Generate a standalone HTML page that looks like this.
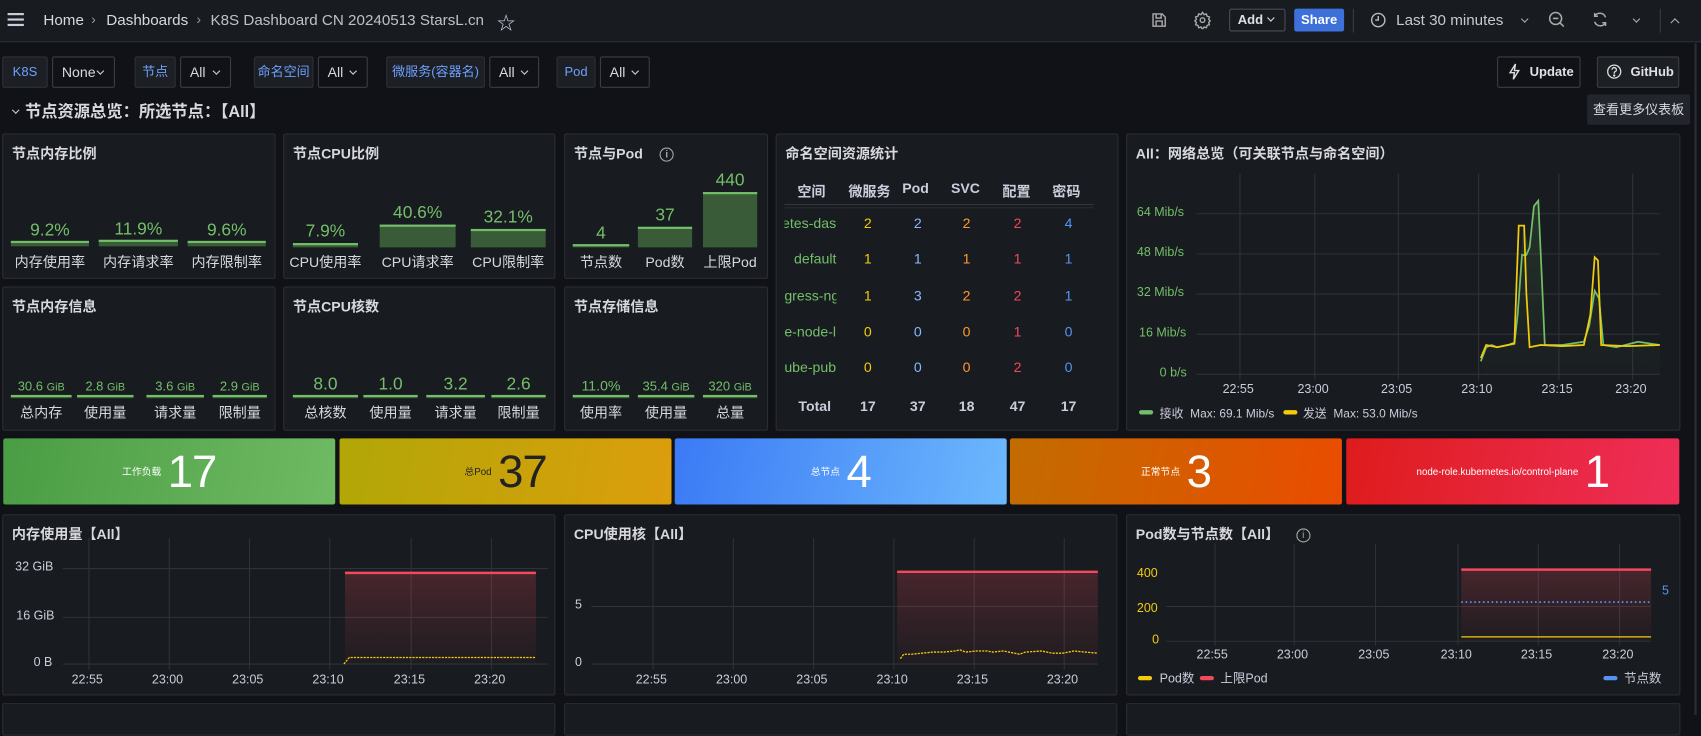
<!DOCTYPE html>
<html><head><meta charset="utf-8">
<style>
html,body{margin:0;padding:0;background:#111217;width:1701px;height:715px;overflow:hidden;}
#root{position:absolute;left:0;top:0;width:1568px;height:659px;transform:scale(1.08482,1.085);transform-origin:0 0;background:#111217;font-family:"Liberation Sans","Noto Sans CJK SC",sans-serif;color:#ccccdc;}
.a{position:absolute;}
.hdr{left:0;top:0;width:1568px;height:38px;background:#181b1f;border-bottom:1px solid #2c2f35;}
.t{position:absolute;white-space:nowrap;font-size:13px;}
.pn{position:absolute;background:#181b1f;border:1px solid #2a2d33;border-radius:2px;box-sizing:border-box;}
.pt{position:absolute;left:8px;top:7px;font-size:13px;font-weight:700;color:#d8d9e0;white-space:nowrap;}
.vl{position:absolute;top:52px;height:29px;box-sizing:border-box;border:1px solid #2c3036;background:#1c1f24;color:#6e9fff;font-size:12px;line-height:27px;text-align:center;border-radius:2px;}
.vv{position:absolute;top:52px;height:29px;box-sizing:border-box;border:1px solid #3a3d44;background:#111217;color:#d8d9e0;font-size:13px;line-height:27px;padding-left:8px;border-radius:2px;}
.vv:after{content:"";position:absolute;right:10px;top:10px;width:4px;height:4px;border-right:1.3px solid #ccc;border-bottom:1.3px solid #ccc;transform:rotate(45deg);}
.col{position:absolute;text-align:center;}
.val{position:absolute;left:0;right:0;color:#73bf69;white-space:nowrap;text-align:center;}
.bar{position:absolute;left:0;right:0;background:#3a5b37;border-top:2px solid #73bf69;box-sizing:border-box;}
.lab{position:absolute;left:-10px;right:-10px;font-size:13px;color:#d8d9e0;text-align:center;white-space:nowrap;}
.st{position:absolute;top:404px;height:61px;border-radius:2px;display:flex;align-items:center;justify-content:center;gap:6px;}
.st .s{font-size:9px;}
.st .n{font-size:42px;font-weight:400;letter-spacing:-1px;}
.tc{position:absolute;font-size:13px;text-align:center;width:44px;}
.ax{position:absolute;font-size:11.5px;color:#ccccdc;white-space:nowrap;}
</style></head><body><div id="root">

<!-- header -->
<div class="a hdr"></div>
<div class="a" style="left:7px;top:12px;width:15px;height:2px;background:#ccccdc;box-shadow:0 5px 0 #ccccdc,0 10px 0 #ccccdc"></div>
<div class="t" style="left:40px;top:10px;font-size:14px;color:#d8d9e0">Home</div>
<div class="t" style="left:84px;top:10px;font-size:13px;color:#999">›</div>
<div class="t" style="left:98px;top:10px;font-size:14px;color:#d8d9e0">Dashboards</div>
<div class="t" style="left:181px;top:10px;font-size:13px;color:#999">›</div>
<div class="t" style="left:194px;top:10px;font-size:14px;color:#c0c1c8">K8S Dashboard CN 20240513 StarsL.cn</div>
<div class="t" style="left:458px;top:7px;font-size:17px;color:#ccccdc">☆</div>
<svg class="a" style="left:1061px;top:11px" width="15" height="15" viewBox="0 0 16 16" fill="none" stroke="#aaa" stroke-width="1.4"><path d="M2 2h9l3 3v9H2z M5 2v4h5V2 M5 14v-5h6v5"/></svg>
<svg class="a" style="left:1100px;top:10px" width="17" height="17" viewBox="0 0 24 24" fill="none" stroke="#aaa" stroke-width="1.8"><circle cx="12" cy="12" r="3"/><path d="M12 2l2 3 3-1 1 3 3 1-1 3 2 2-2 2 1 3-3 1-1 3-3-1-2 3-2-3-3 1-1-3-3-1 1-3-2-2 2-2-1-3 3-1 1-3 3 1z"/></svg>
<div class="a" style="left:1133px;top:8px;width:52px;height:21px;border:1px solid #4a4d54;box-sizing:border-box;border-radius:2px;font-size:12px;font-weight:700;line-height:19px;padding-left:7px;color:#e0e0e6">Add</div>
<div class="a" style="left:1169px;top:14px;width:4px;height:4px;border-right:1.3px solid #ddd;border-bottom:1.3px solid #ddd;transform:rotate(45deg)"></div>
<div class="a" style="left:1193px;top:8px;width:46px;height:21px;background:#3d71d9;border-radius:2px;font-size:12px;font-weight:700;line-height:21px;text-align:center;color:#fff">Share</div>
<div class="a" style="left:1247px;top:8px;width:1px;height:22px;background:#3a3d44"></div>
<svg class="a" style="left:1263px;top:11px" width="15" height="15" viewBox="0 0 16 16" fill="none" stroke="#bbb" stroke-width="1.4"><circle cx="8" cy="8" r="6.5"/><path d="M8 4v4H5"/></svg>
<div class="t" style="left:1287px;top:10px;font-size:14px;color:#c8c9d0">Last 30 minutes</div>
<div class="a" style="left:1403px;top:15px;width:4px;height:4px;border-right:1.3px solid #aaa;border-bottom:1.3px solid #aaa;transform:rotate(45deg)"></div>
<svg class="a" style="left:1427px;top:10px" width="16" height="16" viewBox="0 0 16 16" fill="none" stroke="#aaa" stroke-width="1.4"><circle cx="7" cy="7" r="5.5"/><path d="M4.5 7h5M11 11l3.5 3.5"/></svg>
<svg class="a" style="left:1467px;top:10px" width="16" height="16" viewBox="0 0 16 16" fill="none" stroke="#aaa" stroke-width="1.4"><path d="M13 6A5.5 5.5 0 0 0 3 5M3 10a5.5 5.5 0 0 0 10 1M3 2v3h3M13 14v-3h-3"/></svg>
<div class="a" style="left:1506px;top:15px;width:4px;height:4px;border-right:1.3px solid #aaa;border-bottom:1.3px solid #aaa;transform:rotate(45deg)"></div>
<div class="a" style="left:1530px;top:8px;width:1px;height:22px;background:#3a3d44"></div>
<div class="a" style="left:1541px;top:18px;width:5px;height:5px;border-left:1.4px solid #aaa;border-top:1.4px solid #aaa;transform:rotate(45deg)"></div>

<!-- variables -->
<div class="vl" style="left:2px;width:42px">K8S</div>
<div class="vv" style="left:48px;width:58px">None</div>
<div class="vl" style="left:124px;width:38px">节点</div>
<div class="vv" style="left:166px;width:47px">All</div>
<div class="vl" style="left:234px;width:55px">命名空间</div>
<div class="vv" style="left:293px;width:46px">All</div>
<div class="vl" style="left:356px;width:91px">微服务(容器名)</div>
<div class="vv" style="left:451px;width:46px">All</div>
<div class="vl" style="left:513px;width:36px">Pod</div>
<div class="vv" style="left:553px;width:46px">All</div>
<div class="a" style="left:1380px;top:52px;width:77px;height:29px;border:1px solid #3a3d44;box-sizing:border-box;border-radius:2px;font-size:12px;font-weight:700;line-height:27px;padding-left:29px;color:#e0e0e6">Update</div>
<svg class="a" style="left:1390px;top:58px" width="12" height="16" viewBox="0 0 12 16" fill="none" stroke="#ddd" stroke-width="1.3"><path d="M7 1L2 9h4l-1 6 5-8H6z"/></svg>
<div class="a" style="left:1472px;top:52px;width:76px;height:29px;border:1px solid #3a3d44;background:#1c1f24;box-sizing:border-box;border-radius:2px;font-size:12px;font-weight:700;line-height:27px;padding-left:30px;color:#e0e0e6">GitHub</div>
<svg class="a" style="left:1481px;top:59px" width="14" height="14" viewBox="0 0 14 14" fill="none" stroke="#ddd" stroke-width="1.2"><circle cx="7" cy="7" r="6"/><path d="M5 5.3a2 2 0 1 1 2.5 1.9c-.4.2-.5.5-.5 1V9"/><circle cx="7" cy="10.6" r=".5" fill="#ddd"/></svg>
<div class="a" style="left:1463px;top:87px;width:95px;height:28px;background:#22252b;border-radius:2px;font-size:12px;line-height:28px;text-align:center;color:#d8d9e0">查看更多仪表板</div>

<div class="a" style="left:12px;top:99px;width:4px;height:4px;border-right:1.3px solid #ccc;border-bottom:1.3px solid #ccc;transform:rotate(45deg)"></div>
<div class="t" style="left:23px;top:92px;font-size:15px;font-weight:700;color:#d8d9e0">节点资源总览：所选节点：【All】</div>

<!-- row1 panels -->
<div class="pn" style="left:2px;top:123px;width:252px;height:134px"><div class="pt">节点内存比例</div></div>
<div class="pn" style="left:261px;top:123px;width:251px;height:134px"><div class="pt">节点CPU比例</div></div>
<div class="pn" style="left:520px;top:123px;width:188px;height:134px"><div class="pt">节点与Pod <span style="display:inline-block;margin-left:12px;width:11px;height:11px;border:1.3px solid #aaa;border-radius:50%;font-size:9px;line-height:11px;text-align:center;color:#aaa;vertical-align:1px">i</span></div></div>
<div class="pn" style="left:715px;top:123px;width:316px;height:274px"><div class="pt">命名空间资源统计</div></div>
<div class="pn" style="left:1038px;top:123px;width:511px;height:274px"><div class="pt">All：网络总览（可关联节点与命名空间）</div></div>
<div class="pn" style="left:2px;top:264px;width:252px;height:133px"><div class="pt">节点内存信息</div></div>
<div class="pn" style="left:261px;top:264px;width:251px;height:133px"><div class="pt">节点CPU核数</div></div>
<div class="pn" style="left:520px;top:264px;width:188px;height:133px"><div class="pt">节点存储信息</div></div>

<!-- bar gauges row1 -->
<div class="col" style="left:10px;top:0;width:72px"><div class="val" style="top:204px;font-size:16px">9.2%</div><div class="bar" style="top:222px;height:5px"></div><div class="lab" style="top:231px">内存使用率</div></div>
<div class="col" style="left:91px;top:0;width:73px"><div class="val" style="top:203px;font-size:16px">11.9%</div><div class="bar" style="top:221px;height:6px"></div><div class="lab" style="top:231px">内存请求率</div></div>
<div class="col" style="left:173px;top:0;width:72px"><div class="val" style="top:204px;font-size:16px">9.6%</div><div class="bar" style="top:222px;height:5px"></div><div class="lab" style="top:231px">内存限制率</div></div>

<div class="col" style="left:270px;top:0;width:60px"><div class="val" style="top:205px;font-size:16px">7.9%</div><div class="bar" style="top:224px;height:4px"></div><div class="lab" style="top:231px">CPU使用率</div></div>
<div class="col" style="left:350px;top:0;width:70px"><div class="val" style="top:188px;font-size:16px">40.6%</div><div class="bar" style="top:207px;height:21px"></div><div class="lab" style="top:231px">CPU请求率</div></div>
<div class="col" style="left:434px;top:0;width:69px"><div class="val" style="top:192px;font-size:16px">32.1%</div><div class="bar" style="top:211px;height:17px"></div><div class="lab" style="top:231px">CPU限制率</div></div>

<div class="col" style="left:528px;top:0;width:52px"><div class="val" style="top:207px;font-size:16px">4</div><div class="bar" style="top:225px;height:3px"></div><div class="lab" style="top:231px">节点数</div></div>
<div class="col" style="left:588px;top:0;width:50px"><div class="val" style="top:190px;font-size:16px">37</div><div class="bar" style="top:209px;height:19px"></div><div class="lab" style="top:231px">Pod数</div></div>
<div class="col" style="left:648px;top:0;width:50px"><div class="val" style="top:158px;font-size:16px">440</div><div class="bar" style="top:177px;height:51px"></div><div class="lab" style="top:231px">上限Pod</div></div>

<!-- bar gauges row2 -->
<div class="col" style="left:10px;top:0;width:56px"><div class="val" style="top:349px;font-size:12px">30.6 <span style="font-size:10px">GiB</span></div><div class="bar" style="top:364px;height:3px"></div><div class="lab" style="top:370px">总内存</div></div>
<div class="col" style="left:71px;top:0;width:52px"><div class="val" style="top:349px;font-size:12px">2.8 <span style="font-size:10px">GiB</span></div><div class="bar" style="top:364px;height:3px"></div><div class="lab" style="top:370px">使用量</div></div>
<div class="col" style="left:135px;top:0;width:53px"><div class="val" style="top:349px;font-size:12px">3.6 <span style="font-size:10px">GiB</span></div><div class="bar" style="top:364px;height:3px"></div><div class="lab" style="top:370px">请求量</div></div>
<div class="col" style="left:196px;top:0;width:50px"><div class="val" style="top:349px;font-size:12px">2.9 <span style="font-size:10px">GiB</span></div><div class="bar" style="top:364px;height:3px"></div><div class="lab" style="top:370px">限制量</div></div>

<div class="col" style="left:270px;top:0;width:60px"><div class="val" style="top:346px;font-size:16px">8.0</div><div class="bar" style="top:364px;height:3px"></div><div class="lab" style="top:370px">总核数</div></div>
<div class="col" style="left:335px;top:0;width:50px"><div class="val" style="top:346px;font-size:16px">1.0</div><div class="bar" style="top:364px;height:3px"></div><div class="lab" style="top:370px">使用量</div></div>
<div class="col" style="left:393px;top:0;width:54px"><div class="val" style="top:346px;font-size:16px">3.2</div><div class="bar" style="top:364px;height:3px"></div><div class="lab" style="top:370px">请求量</div></div>
<div class="col" style="left:453px;top:0;width:50px"><div class="val" style="top:346px;font-size:16px">2.6</div><div class="bar" style="top:364px;height:3px"></div><div class="lab" style="top:370px">限制量</div></div>

<div class="col" style="left:528px;top:0;width:52px"><div class="val" style="top:348px;font-size:13px">11.0%</div><div class="bar" style="top:364px;height:3px"></div><div class="lab" style="top:370px">使用率</div></div>
<div class="col" style="left:588px;top:0;width:52px"><div class="val" style="top:349px;font-size:12px">35.4 <span style="font-size:10px">GiB</span></div><div class="bar" style="top:364px;height:3px"></div><div class="lab" style="top:370px">使用量</div></div>
<div class="col" style="left:648px;top:0;width:50px"><div class="val" style="top:349px;font-size:12px">320 <span style="font-size:10px">GiB</span></div><div class="bar" style="top:364px;height:3px"></div><div class="lab" style="top:370px">总量</div></div>

<!-- table -->
<div class="a" style="left:723px;top:160px;width:285px;height:225px;overflow:hidden">
 <div class="tc" style="left:3px;top:6px;font-weight:700">空间</div>
 <div class="a" style="left:59px;top:6px;font-weight:700;font-size:13px;width:38px;overflow:hidden;white-space:nowrap">微服务</div>
 <div class="tc" style="left:99px;top:6px;font-weight:700">Pod</div>
 <div class="tc" style="left:145px;top:6px;font-weight:700">SVC</div>
 <div class="tc" style="left:192px;top:6px;font-weight:700">配置</div>
 <div class="tc" style="left:238px;top:6px;font-weight:700">密码</div>
 <div class="a" style="left:0;top:28px;width:285px;height:1px;background:#34373d"></div>
 <div class="a" style="left:0;top:31px;width:285px;height:1px;background:#2a2d33"></div>
</div>
<div class="a" style="left:723px;top:189px;width:285px;height:170px;overflow:hidden;font-size:13px">
 <div class="a" style="left:0;top:9px;width:48px;overflow:hidden;direction:rtl;color:#73bf69;white-space:nowrap">etes-das</div>
 <div class="a" style="left:0;top:42px;width:48px;text-align:right;color:#73bf69;white-space:nowrap;overflow:hidden">default</div>
 <div class="a" style="left:0;top:76px;width:48px;overflow:hidden;color:#73bf69;white-space:nowrap">gress-ngi</div>
 <div class="a" style="left:0;top:109px;width:48px;overflow:hidden;color:#73bf69;white-space:nowrap">e-node-le</div>
 <div class="a" style="left:0;top:142px;width:48px;overflow:hidden;color:#73bf69;white-space:nowrap">ube-publ</div>
</div>
<div class="a" style="left:723px;top:189px;font-size:13px">
 <div class="tc" style="left:55px;top:9px;color:#f2cc0c">2</div><div class="tc" style="left:101px;top:9px;color:#8ab8ff">2</div><div class="tc" style="left:146px;top:9px;color:#ff9830">2</div><div class="tc" style="left:193px;top:9px;color:#f2495c">2</div><div class="tc" style="left:240px;top:9px;color:#5794f2">4</div>
 <div class="tc" style="left:55px;top:42px;color:#f2cc0c">1</div><div class="tc" style="left:101px;top:42px;color:#8ab8ff">1</div><div class="tc" style="left:146px;top:42px;color:#ff9830">1</div><div class="tc" style="left:193px;top:42px;color:#f2495c">1</div><div class="tc" style="left:240px;top:42px;color:#5794f2">1</div>
 <div class="tc" style="left:55px;top:76px;color:#f2cc0c">1</div><div class="tc" style="left:101px;top:76px;color:#8ab8ff">3</div><div class="tc" style="left:146px;top:76px;color:#ff9830">2</div><div class="tc" style="left:193px;top:76px;color:#f2495c">2</div><div class="tc" style="left:240px;top:76px;color:#5794f2">1</div>
 <div class="tc" style="left:55px;top:109px;color:#f2cc0c">0</div><div class="tc" style="left:101px;top:109px;color:#8ab8ff">0</div><div class="tc" style="left:146px;top:109px;color:#ff9830">0</div><div class="tc" style="left:193px;top:109px;color:#f2495c">1</div><div class="tc" style="left:240px;top:109px;color:#5794f2">0</div>
 <div class="tc" style="left:55px;top:142px;color:#f2cc0c">0</div><div class="tc" style="left:101px;top:142px;color:#8ab8ff">0</div><div class="tc" style="left:146px;top:142px;color:#ff9830">0</div><div class="tc" style="left:193px;top:142px;color:#f2495c">2</div><div class="tc" style="left:240px;top:142px;color:#5794f2">0</div>
</div>
<div class="a" style="left:723px;top:367px;font-size:13px;font-weight:700">
 <div class="a" style="left:13px;top:0">Total</div>
 <div class="tc" style="left:55px;top:0">17</div><div class="tc" style="left:101px;top:0">37</div><div class="tc" style="left:146px;top:0">18</div><div class="tc" style="left:193px;top:0">47</div><div class="tc" style="left:240px;top:0">17</div>
</div>

<!-- stats -->
<div class="st" style="left:3px;width:306px;background:linear-gradient(100deg,#4a9d44,#6fba63);color:#fff"><span class="s">工作负载</span><span class="n">17</span></div>
<div class="st" style="left:313px;width:306px;background:linear-gradient(100deg,#b1a707,#dc9e0c);color:#222"><span class="s">总Pod</span><span class="n">37</span></div>
<div class="st" style="left:622px;width:306px;background:linear-gradient(100deg,#3b7af5,#6cb8fd);color:#fff"><span class="s">总节点</span><span class="n">4</span></div>
<div class="st" style="left:931px;width:306px;background:linear-gradient(100deg,#c26c00,#ea4c00);color:#fff"><span class="s">正常节点</span><span class="n">3</span></div>
<div class="st" style="left:1241px;width:307px;background:linear-gradient(100deg,#de1c1c,#ef2e59);color:#fff"><span class="s">node-role.kubernetes.io/control-plane</span><span class="n">1</span></div>

<!-- row3 panels -->
<div class="pn" style="left:2px;top:474px;width:510px;height:167px"><div class="pt">内存使用量【All】</div></div>
<div class="pn" style="left:520px;top:474px;width:510px;height:167px"><div class="pt">CPU使用核【All】</div></div>
<div class="pn" style="left:1038px;top:474px;width:511px;height:167px"><div class="pt">Pod数与节点数【All】 <span style="display:inline-block;margin-left:12px;width:11px;height:11px;border:1.3px solid #aaa;border-radius:50%;font-size:9px;line-height:11px;text-align:center;color:#aaa;font-weight:400;vertical-align:1px">i</span></div></div>
<div class="pn" style="left:2px;top:648px;width:510px;height:30px"></div>
<div class="pn" style="left:520px;top:648px;width:510px;height:30px"></div>
<div class="pn" style="left:1038px;top:648px;width:511px;height:30px"></div>
<div class="a" style="left:1562px;top:40px;width:2px;height:619px;background:#2a2d33"></div>

<!-- charts svg -->
<svg class="a" style="left:0;top:0" width="1568" height="659">
<defs>
<linearGradient id="rg" x1="0" y1="0" x2="0" y2="1"><stop offset="0" stop-color="#f2495c" stop-opacity=".22"/><stop offset="1" stop-color="#f2495c" stop-opacity=".03"/></linearGradient>
<linearGradient id="gg" x1="0" y1="0" x2="0" y2="1"><stop offset="0" stop-color="#73bf69" stop-opacity=".15"/><stop offset="1" stop-color="#73bf69" stop-opacity=".02"/></linearGradient>
</defs>
<g stroke="#2f3238" stroke-width="1">
<path d="M1103 197H1530M1103 234H1530M1103 271H1530M1103 308H1530M1103 345H1530"/>
<path d="M1143 160V350M1212 160V350M1289 160V350M1363 160V350M1437 160V350M1505 160V350"/>
<path d="M58 524H505M58 569H505M58 612H505"/>
<path d="M82 496V617M156 496V617M230 496V617M304 496V617M379 496V617M453 496V617"/>
<path d="M545 559H1012M545 612H1012"/>
<path d="M602 496V617M676 496V617M750 496V617M824 496V617M898 496V617M981 496V617"/>
<path d="M1075 559H1522M1075 591H1522"/>
<path d="M1120 501V595M1193 501V595M1268 501V595M1344 501V595M1418 501V595M1493 501V595"/>
</g>
<path d="M1365 333L1370 320L1375 318L1380 320L1390 318L1396 317L1400 260L1404 210L1410 228L1414 190L1418 185L1421 250L1424 318L1440 318L1460 315L1465 300L1470 268L1474 275L1478 318L1490 320L1510 315L1530 318V345H1365Z" fill="url(#gg)"/>
<path d="M1365 333L1370 320L1375 318L1380 320L1390 318L1396 317L1399 290L1403 235L1407 235L1410 228L1414 190L1418 185L1421 250L1424 318L1440 318L1460 315L1465 300L1470 268L1474 275L1478 318L1490 320L1510 315L1530 318" fill="none" stroke="#73bf69" stroke-width="1.6"/>
<path d="M1365 330L1370 318L1380 320L1390 318L1396 316L1398 260L1400 208L1405 208L1407 270L1410 320L1420 318L1440 319L1460 318L1466 290L1470 237L1473 240L1476 318L1500 319L1530 318" fill="none" stroke="#f2cc0c" stroke-width="1.6"/>
<rect x="318" y="528" width="176" height="84" fill="url(#rg)"/>
<path d="M318 528H494" stroke="#f2495c" stroke-width="2.2"/>
<path d="M317 612L322 606H494" stroke="#f2cc0c" stroke-width="1.2" stroke-dasharray="2 1" fill="none"/>
<rect x="827" y="527" width="185" height="85" fill="url(#rg)"/>
<path d="M827 527H1012" stroke="#f2495c" stroke-width="2.2"/>
<path d="M830 607L833 603L840 603L850 602L860 601L870 601L880 600L885 599L890 601L900 600L910 600L915 601L925 600L935 602L940 603L945 601L960 600L970 602L980 602L990 600L1000 601L1012 602" stroke="#f2cc0c" stroke-width="1.2" stroke-dasharray="2 1" fill="none"/>
<rect x="1347" y="525" width="175" height="66" fill="url(#rg)"/>
<path d="M1347 525H1522" stroke="#f2495c" stroke-width="2.2"/>
<path d="M1347 555H1522" stroke="#5794f2" stroke-width="1.6" stroke-dasharray="1.5 2.5"/>
<path d="M1347 587H1522" stroke="#f2cc0c" stroke-width="1.2"/>
</svg>

<!-- network axes -->
<div class="ax" style="left:1048px;top:190px;color:#73bf69">64 Mib/s</div>
<div class="ax" style="left:1048px;top:227px;color:#73bf69">48 Mib/s</div>
<div class="ax" style="left:1048px;top:264px;color:#73bf69">32 Mib/s</div>
<div class="ax" style="left:1050px;top:301px;color:#73bf69">16 Mib/s</div>
<div class="ax" style="left:1069px;top:338px;color:#73bf69">0 b/s</div>
<div class="ax" style="left:1127px;top:353px">22:55</div>
<div class="ax" style="left:1196px;top:353px">23:00</div>
<div class="ax" style="left:1273px;top:353px">23:05</div>
<div class="ax" style="left:1347px;top:353px">23:10</div>
<div class="ax" style="left:1421px;top:353px">23:15</div>
<div class="ax" style="left:1489px;top:353px">23:20</div>
<div class="a" style="left:1050px;top:378px;width:13px;height:4px;background:#73bf69;border-radius:2px"></div>
<div class="ax" style="left:1069px;top:373px;font-size:11px">接收&nbsp; Max: 69.1 Mib/s</div>
<div class="a" style="left:1183px;top:378px;width:13px;height:4px;background:#f2cc0c;border-radius:2px"></div>
<div class="ax" style="left:1201px;top:373px;font-size:11px">发送&nbsp; Max: 53.0 Mib/s</div>

<!-- mem axes -->
<div class="ax" style="left:14px;top:517px">32 GiB</div>
<div class="ax" style="left:15px;top:562px">16 GiB</div>
<div class="ax" style="left:31px;top:605px">0 B</div>
<div class="ax" style="left:66px;top:621px">22:55</div>
<div class="ax" style="left:140px;top:621px">23:00</div>
<div class="ax" style="left:214px;top:621px">23:05</div>
<div class="ax" style="left:288px;top:621px">23:10</div>
<div class="ax" style="left:363px;top:621px">23:15</div>
<div class="ax" style="left:437px;top:621px">23:20</div>
<!-- cpu axes -->
<div class="ax" style="left:530px;top:552px">5</div>
<div class="ax" style="left:530px;top:605px">0</div>
<div class="ax" style="left:586px;top:621px">22:55</div>
<div class="ax" style="left:660px;top:621px">23:00</div>
<div class="ax" style="left:734px;top:621px">23:05</div>
<div class="ax" style="left:808px;top:621px">23:10</div>
<div class="ax" style="left:882px;top:621px">23:15</div>
<div class="ax" style="left:965px;top:621px">23:20</div>
<!-- pod axes -->
<div class="ax" style="left:1048px;top:523px;color:#f2cc0c">400</div>
<div class="ax" style="left:1048px;top:555px;color:#f2cc0c">200</div>
<div class="ax" style="left:1062px;top:584px;color:#f2cc0c">0</div>
<div class="ax" style="left:1532px;top:539px;color:#5794f2">5</div>
<div class="ax" style="left:1103px;top:598px">22:55</div>
<div class="ax" style="left:1177px;top:598px">23:00</div>
<div class="ax" style="left:1252px;top:598px">23:05</div>
<div class="ax" style="left:1328px;top:598px">23:10</div>
<div class="ax" style="left:1402px;top:598px">23:15</div>
<div class="ax" style="left:1477px;top:598px">23:20</div>
<div class="a" style="left:1049px;top:623px;width:13px;height:4px;background:#f2cc0c;border-radius:2px"></div>
<div class="ax" style="left:1069px;top:617px">Pod数</div>
<div class="a" style="left:1106px;top:623px;width:13px;height:4px;background:#f2495c;border-radius:2px"></div>
<div class="ax" style="left:1125px;top:617px">上限Pod</div>
<div class="a" style="left:1478px;top:623px;width:13px;height:4px;background:#5794f2;border-radius:2px"></div>
<div class="ax" style="left:1497px;top:617px">节点数</div>

</div></body></html>
